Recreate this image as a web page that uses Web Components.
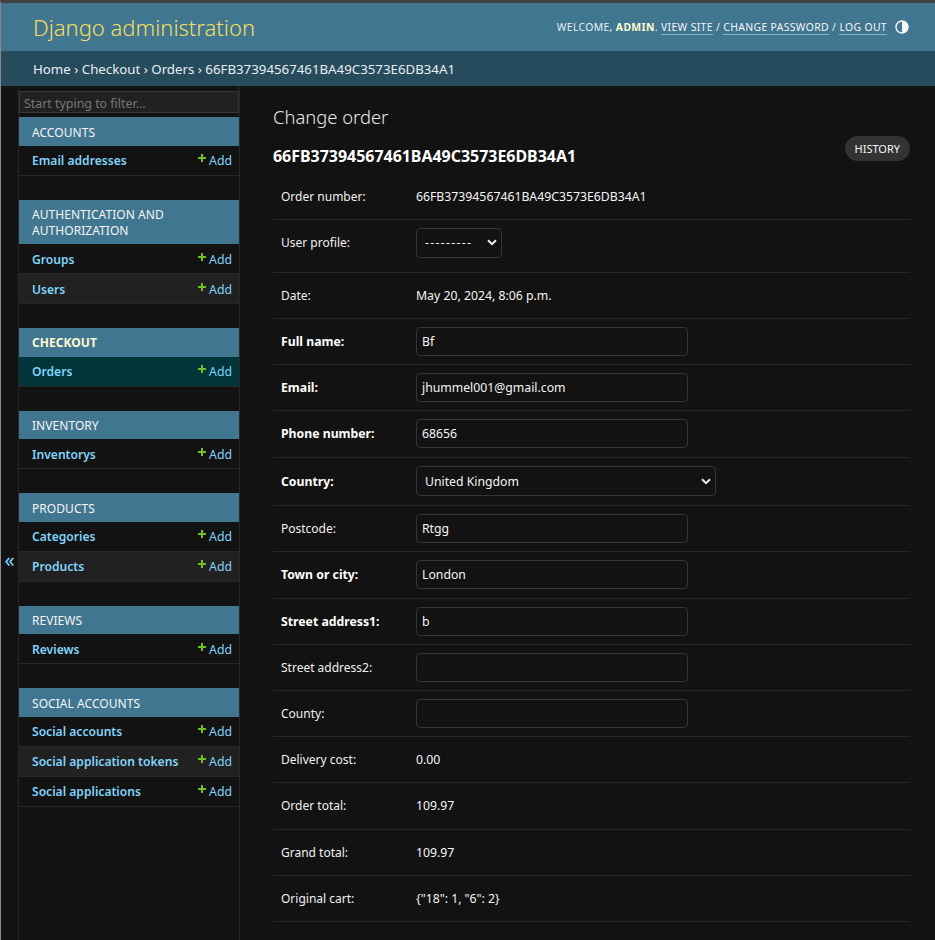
<!DOCTYPE html>
<html><head><meta charset="utf-8"><style>
html,body{margin:0;padding:0;height:940px;overflow:hidden;background:#121212;}
body{font-family:"Noto Sans",sans-serif;color:#f5f5f5;font-size:12.25px;border-top:3px solid #414141;border-left:1px solid #8a8a8a;box-sizing:border-box;}
</style></head><body>
<template id="hdr"><style>
:host{display:block;font-family:"Noto Sans",sans-serif}
.top{height:48px;background:#417690;display:flex;align-items:center;justify-content:space-between;padding:0 25px 0 32px;box-sizing:border-box}
h1{margin:0;font-weight:300;font-size:22px;color:#f5dd5d}
.tools{font-size:10.4px;color:#e6f1f5;display:flex;align-items:center;gap:7px;letter-spacing:.36px;}
.tools b{color:#fffbd0}
.tools a{color:#f5f5f5;border-bottom:1px solid #8fb0c0;text-decoration:none}
.crumbs{height:35px;background:#264b5d;display:flex;align-items:center;padding-left:32px;font-size:13.27px;color:#e8eef1}
svg{display:block}
</style><div class="top"><h1>Django administration</h1><div class="tools"><span>WELCOME, <b>ADMIN</b>. <a>VIEW SITE</a> / <a>CHANGE PASSWORD</a> / <a>LOG OUT</a></span><svg width="16" height="16" viewBox="0 0 24 24"><path d="M12 22C6.477 22 2 17.523 2 12S6.477 2 12 2s10 4.477 10 10-4.477 10-10 10zm0-2V4a8 8 0 1 0 0 16z" fill="#f5f5f5"/></svg></div></div><div class="crumbs">Home › Checkout › Orders › 66FB37394567461BA49C3573E6DB34A1</div></template>

<template id="grp"><style>
:host{display:block;margin-bottom:24px;font-family:"Noto Sans",sans-serif}
.cap{background:#417690;color:#f5f5f5;font-size:12px;line-height:16px;padding:7.5px 13px 5px;letter-spacing:.05px}
:host([active]) .cap{font-weight:700;color:#fffbd0;padding:7px 13px 5.5px}
</style><div class="cap"><slot name="cap"></slot></div><slot></slot></template>

<template id="item"><style>
:host{display:flex;justify-content:space-between;align-items:center;height:30px;box-sizing:border-box;border-bottom:1px solid #272727;padding:1px 7px 0 13px;font-size:12.25px;color:#81d4fa;font-family:"Noto Sans",sans-serif}
:host([alt]){background:#212121}
:host([cur]){background:#00363a}
.n{font-weight:600;font-size:12.1px}
.a{display:flex;align-items:center;gap:3px}
svg{display:block;margin-top:-5px}
</style><span class="n"><slot></slot></span><span class="a"><svg width="8" height="8" viewBox="0 0 8 8"><path d="M3 0h2v3h3v2H5v3H3V5H0V3h3z" fill="#70bf2b"/></svg>Add</span></template>

<template id="row"><style>
:host{display:flex;box-sizing:border-box;border-bottom:1px solid #272727;padding:0 8px;align-items:center;font-family:"Noto Sans",sans-serif;font-size:12.25px}
.l{width:135px;flex:none;color:#f0f0f0;font-size:12px}
:host([req]) .l{font-weight:700;color:#fff;font-size:12.25px}
.v{color:#f5f5f5}
</style><span class="l"><slot name="l"></slot></span><span class="v"><slot></slot></span></template>

<template id="fld"><style>
:host{display:block;box-sizing:border-box;width:272px;height:29px;border:1px solid #353535;border-radius:4px;padding:0 5px;line-height:27px;font-size:12.25px;color:#f5f5f5;background:#121212;font-family:"Noto Sans",sans-serif}
</style><slot></slot></template>

<template id="sel"><style>
:host{display:flex;align-items:center;justify-content:space-between;box-sizing:border-box;height:30px;border:1px solid #353535;border-radius:4px;padding:0 4px 0 8px;font-size:12.25px;color:#f5f5f5;background:#121212;font-family:"Noto Sans",sans-serif}
</style><span><slot></slot></span><svg width="10" height="7" viewBox="0 0 10 7"><path d="M1 1.2l4 4 4-4" fill="none" stroke="#f0f0f0" stroke-width="2"/></svg></template>

<template id="app"><style>
:host{display:block}
.main{display:flex;height:854px;overflow:hidden}
.tog{width:18px;flex:none;box-sizing:border-box;border-right:1px solid #272727;display:flex;align-items:center;justify-content:center;color:#81d4fa;font-size:20px;font-family:"Noto Sans",sans-serif;padding-top:92px}
.side{width:220px;flex:none;border-right:1px solid #272727;padding-top:5px;box-sizing:content-box}
.filter{height:22px;box-sizing:border-box;background:#212121;border:1px solid #353535;margin-bottom:4px;color:#777;font-size:12.4px;line-height:24px;padding-left:4px;font-family:"Noto Sans",sans-serif;overflow:hidden}
.content{flex:1;padding:17px 25px 0 33px;min-width:0;font-family:"Noto Sans",sans-serif}
h1{margin:0;font-weight:300;font-size:18.4px;line-height:27px;color:#e8e8e8}
.sub{display:flex;justify-content:space-between;align-items:flex-start;height:37px;margin-top:6px}
h2{margin:10px 0 0;font-size:15.95px;line-height:20px;font-weight:700;color:#fff}
.hist{height:25px;border-radius:13px;background:#333;color:#f5f5f5;font-size:11px;line-height:25px;padding:0 10px}
</style>
<div class="main"><div class="tog"><span>«</span></div><div class="side"><div class="filter">Start typing to filter...</div><slot name="side"></slot></div>
<div class="content"><h1>Change order</h1><div class="sub"><h2>66FB37394567461BA49C3573E6DB34A1</h2><div class="hist">HISTORY</div></div><slot></slot></div></div></template>

<adm-hdr></adm-hdr>
<adm-app>
<div slot="side">
<adm-grp><span slot="cap">ACCOUNTS</span><adm-item>Email addresses</adm-item></adm-grp>
<adm-grp><span slot="cap">AUTHENTICATION AND<br>AUTHORIZATION</span><adm-item>Groups</adm-item><adm-item alt>Users</adm-item></adm-grp>
<adm-grp active><span slot="cap">CHECKOUT</span><adm-item cur>Orders</adm-item></adm-grp>
<adm-grp><span slot="cap">INVENTORY</span><adm-item>Inventorys</adm-item></adm-grp>
<adm-grp><span slot="cap">PRODUCTS</span><adm-item>Categories</adm-item><adm-item alt>Products</adm-item></adm-grp>
<adm-grp><span slot="cap">REVIEWS</span><adm-item>Reviews</adm-item></adm-grp>
<adm-grp><span slot="cap">SOCIAL ACCOUNTS</span><adm-item>Social accounts</adm-item><adm-item alt>Social application tokens</adm-item><adm-item>Social applications</adm-item></adm-grp>
</div>
<adm-row style="height:47px"><span slot="l">Order number:</span>66FB37394567461BA49C3573E6DB34A1</adm-row>
<adm-row style="height:53px;padding-bottom:7px"><span slot="l">User profile:</span><adm-sel style="width:86px"><span style="letter-spacing:1.3px">---------</span></adm-sel></adm-row>
<adm-row style="height:46px"><span slot="l">Date:</span>May 20, 2024, 8:06 p.m.</adm-row>
<adm-row req style="height:46px"><span slot="l">Full name:</span><adm-fld>Bf</adm-fld></adm-row>
<adm-row req style="height:46px"><span slot="l">Email:</span><adm-fld>jhummel001@gmail.com</adm-fld></adm-row>
<adm-row req style="height:47px;padding-bottom:1px"><span slot="l">Phone number:</span><adm-fld>68656</adm-fld></adm-row>
<adm-row req style="height:48px;padding-bottom:1px"><span slot="l">Country:</span><adm-sel style="width:300px">United Kingdom</adm-sel></adm-row>
<adm-row style="height:46px"><span slot="l">Postcode:</span><adm-fld>Rtgg</adm-fld></adm-row>
<adm-row req style="height:47px;padding-bottom:1px"><span slot="l">Town or city:</span><adm-fld>London</adm-fld></adm-row>
<adm-row req style="height:46px"><span slot="l">Street address1:</span><adm-fld>b</adm-fld></adm-row>
<adm-row style="height:46px"><span slot="l">Street address2:</span><adm-fld></adm-fld></adm-row>
<adm-row style="height:46px"><span slot="l">County:</span><adm-fld></adm-fld></adm-row>
<adm-row style="height:46px"><span slot="l">Delivery cost:</span>0.00</adm-row>
<adm-row style="height:47px;padding-bottom:1px"><span slot="l">Order total:</span>109.97</adm-row>
<adm-row style="height:46px"><span slot="l">Grand total:</span>109.97</adm-row>
<adm-row style="height:46px"><span slot="l">Original cart:</span>{"18": 1, "6": 2}</adm-row>
</adm-app>
<script>
const def=(n,t)=>customElements.define(n,class extends HTMLElement{constructor(){super();this.attachShadow({mode:'open'}).appendChild(document.getElementById(t).content.cloneNode(true))}});
def('adm-hdr','hdr');def('adm-grp','grp');def('adm-item','item');def('adm-row','row');def('adm-fld','fld');def('adm-sel','sel');def('adm-app','app');
</script>
</body></html>
